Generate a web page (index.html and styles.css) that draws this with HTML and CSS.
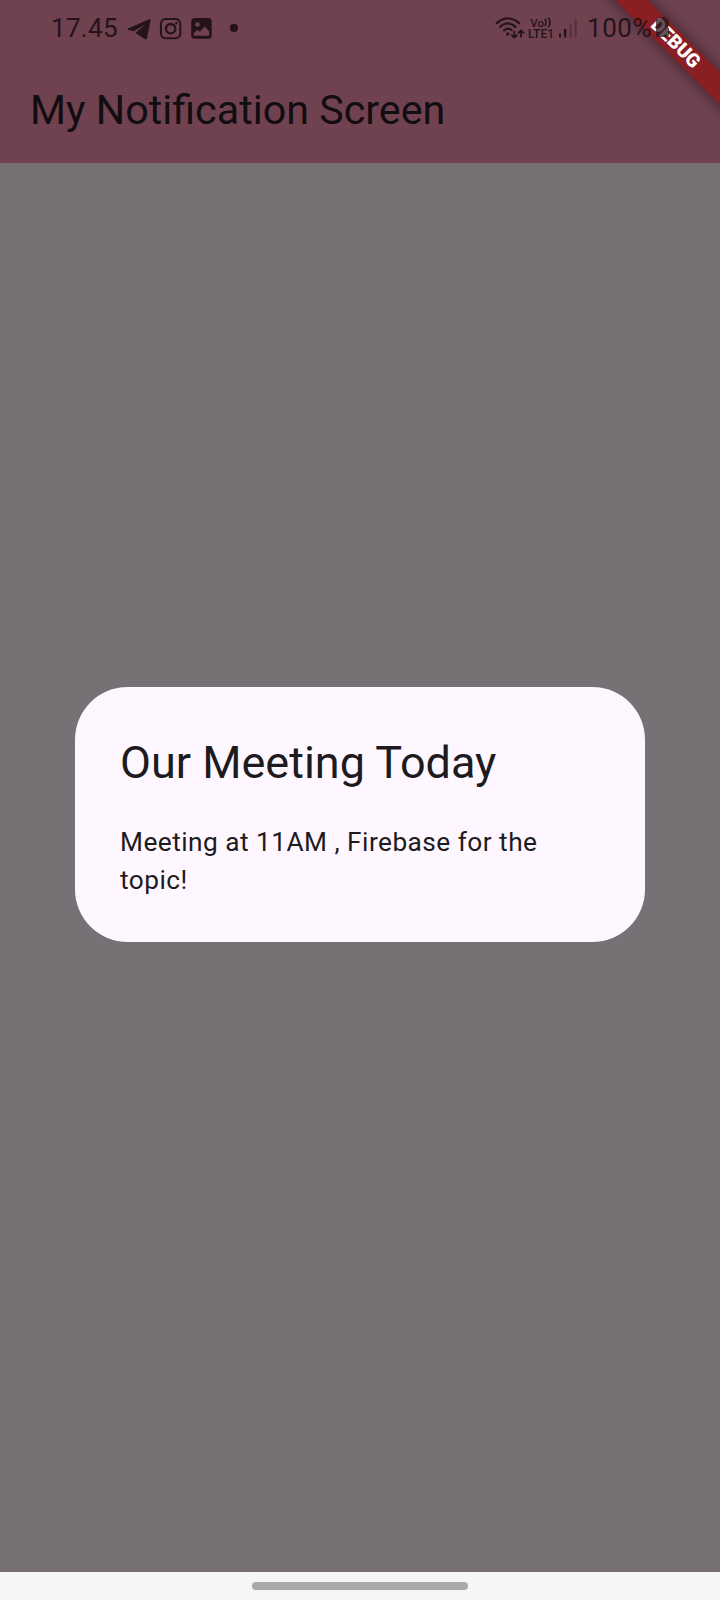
FILE: index.html
```html
<!DOCTYPE html>
<html lang="en">
<head>
<meta charset="utf-8">
<title>My Notification Screen</title>
<link rel="stylesheet" href="styles.css">
</head>
<body>
<div class="phone">
  <header class="appbar">
    <div class="status">
      <div class="status-left">
        <span class="clock">17.45</span>
        <svg class="app-icons" width="113" height="24" viewBox="0 0 113 24" fill="#25131a">
          <path d="M1.2 10.600 22 1.200Q23.900.5 23.600 2.500L20 20Q19.400 22 17.600 21L8.500 15 18 6.500 7 13.300 1.200 11.900Q-.3 11.200 1.200 10.600Z"/>
          <g transform="translate(.7 -.3)"><g fill="none" stroke="#25131a" stroke-width="2"><rect x="33.200" y="1.200" width="19.400" height="19.400" rx="5"/><circle cx="43" cy="11" r="4.700" stroke-width="2.300"/></g><circle cx="48.700" cy="5.400" r="1.300"/>
          <path fill-rule="evenodd" d="M67.500 .3H80.500Q84 .3 84 3.500V18Q84 21 80.500 21H67.500Q63.500 21 63.500 18V3.500Q63.500 .3 67.500 .3ZM69.800 4.500A2.300 2.300 0 1 0 69.800 9.100 2.300 2.300 0 1 0 69.800 4.500ZM66 15.500V18H81.500V13.500L77 8.800 72.300 14 69.800 12Z"/>
          <circle cx="106.300" cy="10.200" r="4.100"/></g>
        </svg>
      </div>
      <div class="status-right">
        <svg class="wifi" width="30" height="24" viewBox="0 0 30 24" fill="none" stroke="#25131a" stroke-width="2.100">
          <path d="M1 6.800Q12.500-4.200 25 6.800M4.500 10.600Q12.700 2.300 21.200 10.600M8.300 14.200Q12.500 9.500 17.300 13.500"/>
          <circle cx="12.700" cy="17" r="1.700" fill="#25131a" stroke="none"/>
          <path stroke-width="1.800" d="M19.300 14V20.500M16.300 17.700 19.300 20.700 22.300 17.700M26 20.500V13.500M23 16.300 26 13.300 29 16.300"/>
        </svg>
        <div class="volte"><span class="vo">Vo<svg width="8" height="11" viewBox="0 0 8 11" fill="none" stroke="#25131a" stroke-width="1.600"><path d="M.8 2Q3.300 5.500.8 9M4.300.8Q7.800 5.500 4.300 10.200"/></svg></span><span class="lte">LTE1</span></div>
        <svg class="signal" width="18" height="20" viewBox="0 0 18 20" fill="#25131a"><rect y="14.500" width="2" height="4"/><rect x="5" y="10" width="2.300" height="8.500"/><g opacity=".32"><rect x="10.500" y="5.500" width="2.300" height="13"/><rect x="15.500" width="2.300" height="18.500"/></g></svg>
        <span class="percent">100%</span>
      </div>
    </div>
    <h1 class="title">My Notification Screen</h1>
    <div class="ribbon">DEBUG</div>
    <svg class="battery" width="15" height="21" viewBox="0 0 15 21" fill="#25131a" fill-opacity=".72"><path d="M4 2V0H11V2H12Q14 2 14 4V8L12.500 9.500 14 11V18Q14 20 12 20H3Q1 20 1 18V4Q1 2 3 2Z"/></svg>
  </header>
  <main class="scrim">
    <section class="dialog" role="dialog">
      <h2 class="dialog-title">Our Meeting Today</h2>
      <p class="dialog-text">Meeting at 11AM , Firebase for the topic!</p>
    </section>
  </main>
  <nav class="navbar"><div class="handle"></div></nav>
</div>
</body>
</html>
```
FILE: styles.css
```css
* { box-sizing: border-box; }
body { margin: 0; font-family: Roboto, sans-serif; }
.phone { width: 720px; height: 1600px; display: flex; flex-direction: column; overflow: hidden; }
.appbar { position: relative; overflow: hidden; height: 163px; flex: none; background: #704250; }
.status { position: relative; z-index: 1; height: 58px; display: flex; justify-content: space-between; padding: 0 68px 0 51px; color: #25131a; }
.status-left, .status-right { display: flex; align-items: flex-start; }
.clock { font-size: 26px; line-height: 30px; margin-top: 13px; width: 76px; letter-spacing: .3px; }
.app-icons { margin-top: 18px; }
.wifi { margin-top: 17px; }
.volte { display: flex; flex-direction: column; align-items: center; width: 26px; margin: 17px 0 0 3px; font-weight: 500; }
.vo { font-size: 11.5px; line-height: 12px; height: 11px; display: flex; }
.lte { font-size: 12px; line-height: 13px; letter-spacing: .1px; white-space: nowrap; }
.signal { margin: 19px 0 0 5px; }
.percent { font-size: 26px; line-height: 30px; margin: 13px 0 0 10px; letter-spacing: .5px; }
.title { margin: 22px 0 0 30px; font-size: 41.25px; line-height: 60px; font-weight: 400; color: #110d11; }
.ribbon { position: absolute; left: 525.5px; top: 33.2px; width: 300px; height: 22.5px; transform: rotate(45deg); background: #8b1e22; box-shadow: 0 0 16px rgba(0,0,0,.5); color: #fff; font-size: 19.1px; font-weight: 900; line-height: 22.5px; text-align: center; text-indent: -2px; }
.battery { position: absolute; z-index: 2; left: 655px; top: 17px; }
.scrim { flex: 1; background: #777175; padding: 524px 75px 0; }
.dialog { background: #fef7ff; border-radius: 52.5px; padding: 46px 45px 44px; height: 255px; }
.dialog-title { margin: 0 0 31px; font-size: 45px; line-height: 60px; font-weight: 400; color: #1d1b20; }
.dialog-text { margin: 0; font-size: 26.25px; line-height: 37.5px; letter-spacing: .47px; color: #1d1b20; }
.navbar { height: 28px; flex: none; background: #f6f6f6; display: flex; justify-content: center; padding-top: 10px; }
.handle { width: 216px; height: 8px; border-radius: 4px; background: #a9a9a9; }
```
